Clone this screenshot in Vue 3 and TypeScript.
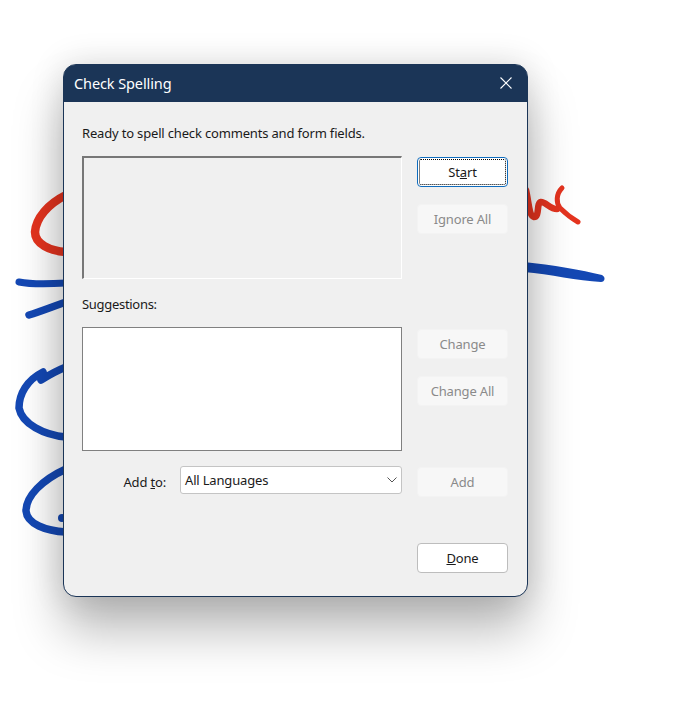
<script setup lang="ts">
const strokes = [
  { d: 'M66 195C48 204 36 218 35 232C35 244 50 251 66 252', color: '#e5341f', width: 8.5 },
  { d: 'M526 190C529 203 529 216 534 217C540 217 536 203 541 202C546 202 550 209 557 209', color: '#e5341f', width: 6.5 },
  { d: 'M562 188C556 194 556 203 560 208C565 213 571 218 578 222', color: '#e5341f', width: 5 },
  { d: 'M19 282C34 285 50 284 66 283', color: '#1448b4', width: 7 },
  { d: 'M29 315C42 311 54 306 66 302', color: '#1448b4', width: 7.5 },
  { d: 'M43 372C27 380 19 394 19 408C22 424 44 435 66 437M41 380C49 375 56 371 66 367', color: '#1448b4', width: 7.5 },
  { d: 'M66 469C42 480 26 496 26 511C27 524 46 531 66 532', color: '#1448b4', width: 7.5 },
]
</script>

<template>
  <div class="canvas">
    <svg class="scribbles" width="695" height="724" viewBox="0 0 695 724" fill="none">
      <path
        v-for="(s, i) in strokes"
        :key="i"
        :d="s.d"
        :stroke="s.color"
        :stroke-width="s.width"
        stroke-linecap="round"
        stroke-linejoin="round"
      />
      <path d="M524 262C552 265 582 270 602 275C606 277 605 282 601 282C578 281 550 274 524 272Z" fill="#1448b4" />
      <circle cx="62" cy="518" r="4" fill="#1448b4" />
    </svg>

    <div class="dialog">
      <div class="titlebar">
        <span class="title">Check Spelling</span>
        <svg class="close" width="12" height="12" viewBox="0 0 12 12">
          <path d="M0.5 0.5L11.5 11.5M11.5 0.5L0.5 11.5" stroke="#fff" stroke-width="1.1" fill="none" />
        </svg>
      </div>

      <div class="body">
        <p class="intro">Ready to spell check comments and form fields.</p>

        <div class="row row-top">
          <div class="box box-sunken"></div>
          <div class="actions actions-top">
            <button class="btn btn-focus"><span class="focus-ring">St<span class="u">a</span>rt</span></button>
            <button class="btn" disabled>Ignore All</button>
          </div>
        </div>

        <p class="label">Suggestions:</p>

        <div class="row">
          <div class="box box-list"></div>
          <div class="actions">
            <button class="btn" disabled>Change</button>
            <button class="btn" disabled>Change All</button>
          </div>
        </div>

        <div class="row row-add">
          <div class="add-to">
            <span class="add-label">Add <span class="u">t</span>o:</span>
            <div class="select">
              <span>All Languages</span>
              <svg width="10" height="6" viewBox="0 0 10 6">
                <path d="M0.5 0.5L5 5L9.5 0.5" stroke="#555" stroke-width="1" fill="none" />
              </svg>
            </div>
          </div>
          <button class="btn btn-add" disabled>Add</button>
        </div>

        <div class="footer">
          <button class="btn btn-done"><span class="u">D</span>one</button>
        </div>
      </div>
    </div>
  </div>
</template>

<style>
html,
body {
  background: #fff;
}
</style>

<style scoped>
.canvas {
  position: relative;
  width: 695px;
  height: 724px;
  overflow: hidden;
  background: #fff;
  font-family: 'Noto Sans', 'Open Sans', sans-serif;
  font-size: 13px;
  letter-spacing: -0.17px;
  color: #1a1a1a;
}

.scribbles {
  position: absolute;
  left: 0;
  top: 0;
}

.dialog {
  position: absolute;
  left: 63px;
  top: 64px;
  width: 465px;
  height: 533px;
  box-sizing: border-box;
  display: flex;
  flex-direction: column;
  background: #f0f0f0;
  border: 1px solid #1b3557;
  border-radius: 13px;
  box-shadow: 0 34px 50px rgba(0, 0, 0, 0.27), 0 0 34px rgba(0, 0, 0, 0.14);
}

.titlebar {
  height: 37px;
  box-sizing: border-box;
  flex-shrink: 0;
  display: flex;
  align-items: center;
  justify-content: space-between;
  padding: 0 15px 2px 10px;
  background: #1b3557;
  border-radius: 11px 11px 0 0;
  color: #fff;
}

.title {
  font-size: 14.5px;
  letter-spacing: -0.1px;
}

.body {
  flex: 1;
  display: flex;
  flex-direction: column;
  padding: 21px 19px 23px 18px;
}

.intro,
.label {
  margin: 0;
  line-height: 20px;
}

.row {
  display: flex;
  gap: 15px;
  align-items: flex-start;
}

.row-top {
  margin-top: 13px;
}

.label {
  margin-top: 15px;
  margin-bottom: 13px;
  letter-spacing: -0.3px;
}

.box {
  width: 320px;
  height: 124px;
  box-sizing: border-box;
}

.box-sunken {
  background: #f0f0f0;
  border: 1px solid #fff;
  border-top: 2px solid #777;
  border-left: 2px solid #777;
  height: 123px;
}

.box-list {
  background: #fff;
  border: 1px solid #808080;
}

.actions {
  display: flex;
  flex-direction: column;
  gap: 17px;
  padding-top: 2px;
}

.actions-top {
  padding-top: 1px;
}

.btn {
  width: 91px;
  height: 30px;
  box-sizing: border-box;
  padding: 0;
  font: inherit;
  letter-spacing: inherit;
  color: #8a8a8a;
  background: #f7f7f7;
  border: 1px solid #f3f3f3;
  border-radius: 4px;
}

.btn-focus,
.btn-done {
  color: #1a1a1a;
  background: #fff;
}

.btn-focus {
  padding: 1px;
  border: 1px solid #0f6cbd;
}

.focus-ring {
  display: flex;
  align-items: center;
  justify-content: center;
  height: 100%;
  box-sizing: border-box;
  border: 1px dotted #000;
  border-radius: 2px;
}

.btn-done {
  border: 1px solid #bdbdbd;
}

.btn-add {
  margin-top: 1px;
}

.u {
  text-decoration: underline;
}

.row-add {
  margin-top: 15px;
}

.add-to {
  width: 320px;
  display: flex;
  align-items: center;
  justify-content: flex-end;
  gap: 14px;
}

.add-label {
  padding-top: 3px;
}

.select {
  width: 222px;
  height: 28px;
  box-sizing: border-box;
  display: flex;
  align-items: center;
  justify-content: space-between;
  padding: 0 4px 0 4px;
  background: #fff;
  border: 1px solid #c4c4c4;
  border-radius: 3px;
}

.footer {
  margin-top: auto;
  display: flex;
  justify-content: flex-end;
}
</style>
